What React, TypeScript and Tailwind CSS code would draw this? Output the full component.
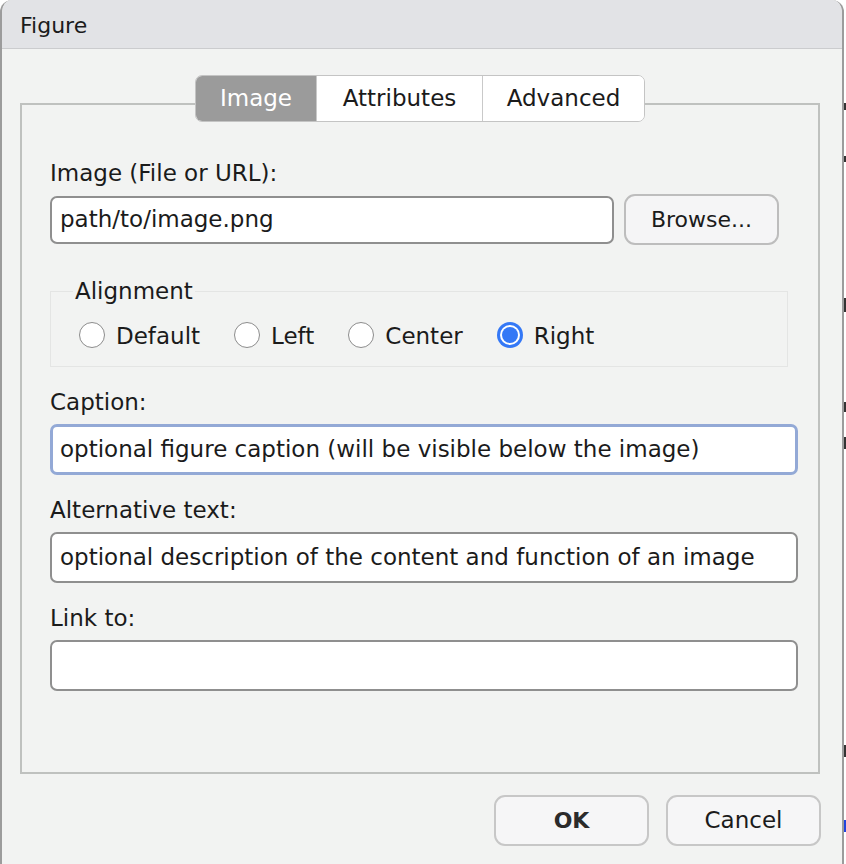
import { useState } from 'react';

const FONT = "font-['DejaVu_Sans',sans-serif]";

function Radio({ label, checked, onClick }: { label: string; checked: boolean; onClick: () => void }) {
  return (
    <button onClick={onClick} className="flex items-center gap-[11px] text-[23px] leading-none text-[#1b1b1b]">
      {checked ? (
        <span className="w-[26px] h-[26px] rounded-full bg-[#3478f6] flex items-center justify-center">
          <span className="w-[20px] h-[20px] rounded-full bg-white flex items-center justify-center">
            <span className="w-[16px] h-[16px] rounded-full bg-[#3478f6]" />
          </span>
        </span>
      ) : (
        <span className="w-[26px] h-[26px] rounded-full bg-white border border-[#8c8c8c]" />
      )}
      <span className="pt-[4px]">{label}</span>
    </button>
  );
}

function Field({ label, value, focused }: { label: string; value: string; focused?: boolean }) {
  return (
    <div className="flex flex-col">
      <div className="text-[23px] leading-[26px] h-[26px] text-[#1b1b1b]">{label}</div>
      <div
        className={`mt-[9px] h-[51px] rounded-[7px] bg-white flex items-center text-[23px] text-[#1b1b1b] ${
          focused ? 'border-[3px] border-[#93a9d6] px-[7px]' : 'border-2 border-[#8f8f8f] px-[8px]'
        }`}
      >
        {value}
      </div>
    </div>
  );
}

export default function App() {
  const [tab, setTab] = useState('Image');
  const [align, setAlign] = useState('Right');
  const tabs = ['Image', 'Attributes', 'Advanced'];

  return (
    <div className={`w-[846px] h-[864px] flex bg-white ${FONT}`}>
      <div className="w-[844px] h-full flex flex-col border-x-2 border-[#9c9c9c] rounded-t-[12px] overflow-hidden bg-[#f2f3f2]">
        {/* Title bar */}
        <div className="h-[49px] shrink-0 bg-[#e2e3e6] border-b border-[#cbccce] flex items-center pl-[18px] pt-[2px] text-[22px] text-[#1b1b1b]">
          Figure
        </div>

        {/* Tab panel */}
        <div className="mt-[54px] ml-[18px] w-[800px] h-[671px] border-2 border-[#bfc1bf] flex flex-col">
          <div className="-mt-[30px] mx-auto flex h-[47px] rounded-[7px] border border-[#c4c4c4] overflow-hidden bg-white">
            {tabs.map((t, i) => (
              <button
                key={t}
                onClick={() => setTab(t)}
                className={`h-full flex items-center justify-center text-[23px] ${
                  i === 0 ? 'w-[120px]' : i === 1 ? 'w-[166px]' : 'w-[162px]'
                } ${i > 0 ? 'border-l border-[#c9c9c9]' : ''} ${
                  tab === t ? 'bg-[#9b9b9b] text-white' : 'bg-white text-[#1b1b1b]'
                }`}
              >
                {t}
              </button>
            ))}
          </div>

          <div className="pl-[28px] pr-[20px] pt-[38px] flex flex-col">
            <div className="text-[23px] leading-[26px] h-[26px] text-[#1b1b1b]">Image (File or URL):</div>
            <div className="mt-[8px] flex items-center gap-[10px]">
              <div className="w-[564px] h-[48px] rounded-[7px] border-2 border-[#8f8f8f] bg-white flex items-center px-[8px] text-[23px] text-[#1b1b1b]">
                path/to/image.png
              </div>
              <button className="w-[155px] h-[51px] rounded-[11px] border-2 border-[#bdbdbd] bg-[#f5f5f6] text-[22px] text-[#1b1b1b]">
                Browse...
              </button>
            </div>

            {/* Alignment group */}
            <fieldset className="mt-[33px] mr-[10px] h-[89px] border border-[#e4e5e4] px-[28px]">
              <legend className="px-[2px] -ml-[6px] text-[23px] leading-[26px] text-[#1b1b1b]">Alignment</legend>
              <div className="mt-[17px] flex items-center gap-[34px]">
                {['Default', 'Left', 'Center', 'Right'].map(a => (
                  <Radio key={a} label={a} checked={align === a} onClick={() => setAlign(a)} />
                ))}
              </div>
            </fieldset>

            <div className="mt-[22px] flex flex-col gap-[22px]">
              <Field label="Caption:" value="optional figure caption (will be visible below the image)" focused />
              <Field label="Alternative text:" value="optional description of the content and function of an image" />
              <Field label="Link to:" value="" />
            </div>
          </div>
        </div>

        {/* Footer buttons */}
        <div className="mt-[21px] flex justify-end gap-[17px] pr-[21px]">
          <button className="w-[155px] h-[51px] rounded-[11px] border-2 border-[#c7c7c7] bg-[#f6f6f7] text-[22px] font-bold text-[#2b2b2b]">
            OK
          </button>
          <button className="w-[155px] h-[51px] rounded-[11px] border-2 border-[#c7c7c7] bg-[#f6f6f7] text-[23px] text-[#1b1b1b]">
            Cancel
          </button>
        </div>
      </div>

      {/* Sliver of the window behind */}
      <div className="w-[2px] h-full flex flex-col bg-white">
        <div className="mt-[103px] h-[7px] bg-[#333]" />
        <div className="mt-[46px] h-[6px] bg-[#333]" />
        <div className="mt-[136px] h-[14px] bg-[#333]" />
        <div className="mt-[90px] h-[10px] bg-[#333]" />
        <div className="mt-[25px] h-[12px] bg-[#333]" />
        <div className="mt-[296px] h-[12px] bg-[#333]" />
        <div className="mt-[63px] h-[12px] bg-[#2244dd]" />
      </div>
    </div>
  );
}
